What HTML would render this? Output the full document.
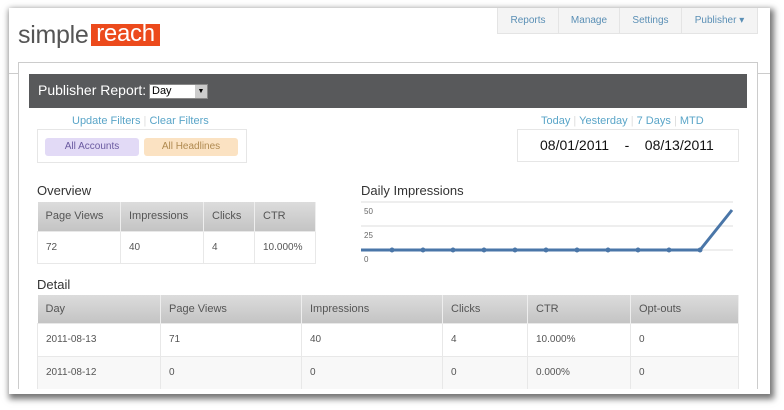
<!DOCTYPE html>
<html><head><style>
*{margin:0;padding:0;box-sizing:border-box}
body{width:784px;height:410px;background:#fff;position:relative;overflow:hidden;font-family:"Liberation Sans",sans-serif}
.a{position:absolute}
.win{left:9px;top:8px;width:761px;height:386px;background:#fff;box-shadow:2px 3px 6px 2px rgba(0,0,0,.55);overflow:hidden}
table{border-collapse:collapse;font-family:"Liberation Sans Narrow","Liberation Sans",sans-serif}
th{background:linear-gradient(#dcdcdc,#c4c4c4);color:#555;font-weight:normal;text-align:left;font-size:11px;padding-left:8px;border-right:1px solid #eee}
td{font-size:10px;color:#555;padding-left:8px;border:1px solid #e8e8e8}
.lk{color:#5aa5c8;font-size:11px}
</style></head><body>
<div class="a win">
<div class="a" style="left:9px;top:13px;font-size:25px;color:#555;letter-spacing:-.3px">simple</div>
<div class="a" style="left:82px;top:16px;width:69px;height:22px;background:#ec4a1c;color:#fff;font-size:24px;line-height:20px;text-align:center;letter-spacing:-.3px">reach</div>
<div class="a" style="left:488px;top:0;width:261px;height:26px;background:#f4f4f4;border:1px solid #e4e4e4;border-top:none;display:flex;font-size:10px;color:#5a8fb5">
<div style="width:61px;text-align:center;line-height:26px;border-right:1px solid #e4e4e4">Reports</div>
<div style="width:61px;text-align:center;line-height:26px;border-right:1px solid #e4e4e4">Manage</div>
<div style="width:62px;text-align:center;line-height:26px;border-right:1px solid #e4e4e4">Settings</div>
<div style="flex:1;text-align:center;line-height:26px">Publisher ▾</div></div>
<div class="a" style="left:0;top:65px;width:10px;border-top:1px solid #ccc"></div>
<div class="a" style="left:749px;top:65px;width:12px;border-top:1px solid #ccc"></div>
<div class="a" style="left:9px;top:54px;width:740px;height:340px;border:1px solid #ccc;border-bottom:none"></div>
<div class="a" style="left:20px;top:66px;width:718px;height:34px;background:#58595b"></div>
<div class="a" style="left:29px;top:74px;color:#fff;font-size:14px">Publisher Report:</div>
<div class="a" style="left:140px;top:76px;width:59px;height:15px;background:#fff;border:1px solid #888;font-size:11px;padding-left:2px;line-height:13px">Day<span style="position:absolute;right:0;top:0;width:12px;height:13px;background:#ccc;font-size:7px;text-align:center">▼</span></div>
<div class="a lk" style="left:63px;top:107px">Update Filters <span style="color:#ddd">|</span> Clear Filters</div>
<div class="a" style="left:28px;top:121px;width:210px;height:34px;border:1px solid #e6e6e6"></div>
<div class="a" style="left:36px;top:130px;width:94px;height:18px;background:#e2daf6;border-radius:3px;color:#6a5aa0;font-size:10px;text-align:center;line-height:18px">All Accounts</div>
<div class="a" style="left:135px;top:130px;width:94px;height:18px;background:#fbe2c2;border-radius:3px;color:#b08a50;font-size:10px;text-align:center;line-height:18px">All Headlines</div>
<div class="a lk" style="left:532px;top:107px">Today <span style="color:#ddd">|</span> Yesterday <span style="color:#ddd">|</span> 7 Days <span style="color:#ddd">|</span> MTD</div>
<div class="a" style="left:508px;top:121px;width:222px;height:33px;border:1px solid #e6e6e6;font-size:14px;color:#111;line-height:31px;padding-left:22px;white-space:pre">08/01/2011    -    08/13/2011</div>
<div class="a" style="left:28px;top:175px;font-size:13px;color:#333">Overview</div>
<table class="a" style="left:28px;top:194px;width:279px">
<tr style="height:29px"><th style="width:83px">Page Views</th><th style="width:83px">Impressions</th><th style="width:51px">Clicks</th><th>CTR</th></tr>
<tr style="height:32px"><td>72</td><td>40</td><td>4</td><td>10.000%</td></tr></table>
<div class="a" style="left:352px;top:175px;font-size:13px;color:#333">Daily Impressions</div>
<svg class="a" style="left:352px;top:192px" width="375" height="65">
<line x1="0" y1="2" x2="372" y2="2" stroke="#ddd"/><line x1="0" y1="26" x2="372" y2="26" stroke="#ddd"/><line x1="0" y1="50" x2="372" y2="50" stroke="#ddd"/>
<text x="3" y="14" font-size="8" fill="#666" font-family="Liberation Sans">50</text>
<text x="3" y="38" font-size="8" fill="#666" font-family="Liberation Sans">25</text>
<text x="3" y="62" font-size="8" fill="#666" font-family="Liberation Sans">0</text>
<polyline points="0,50 339,50 371,10" fill="none" stroke="#4a76a8" stroke-width="3"/>
<g fill="#4a76a8"><circle cx="31" cy="50" r="2.5"/><circle cx="62" cy="50" r="2.5"/><circle cx="92" cy="50" r="2.5"/><circle cx="123" cy="50" r="2.5"/><circle cx="154" cy="50" r="2.5"/><circle cx="185" cy="50" r="2.5"/><circle cx="216" cy="50" r="2.5"/><circle cx="247" cy="50" r="2.5"/><circle cx="277" cy="50" r="2.5"/><circle cx="308" cy="50" r="2.5"/><circle cx="339" cy="50" r="2.5"/></g></svg>
<div class="a" style="left:28px;top:269px;font-size:13px;color:#333">Detail</div>
<table class="a" style="left:28px;top:287px;width:702px">
<tr style="height:28px"><th style="width:123px">Day</th><th style="width:141px">Page Views</th><th style="width:141px">Impressions</th><th style="width:85px">Clicks</th><th style="width:103px">CTR</th><th>Opt-outs</th></tr>
<tr style="height:33px"><td>2011-08-13</td><td>71</td><td>40</td><td>4</td><td>10.000%</td><td>0</td></tr>
<tr style="height:33px;background:#f8f8f8"><td>2011-08-12</td><td>0</td><td>0</td><td>0</td><td>0.000%</td><td>0</td></tr>
<tr style="height:20px"><td></td><td></td><td></td><td></td><td></td><td></td></tr></table>
<div class="a" style="left:0;top:381px;width:761px;height:5px;background:#fff"></div>
</div>
</body></html>
